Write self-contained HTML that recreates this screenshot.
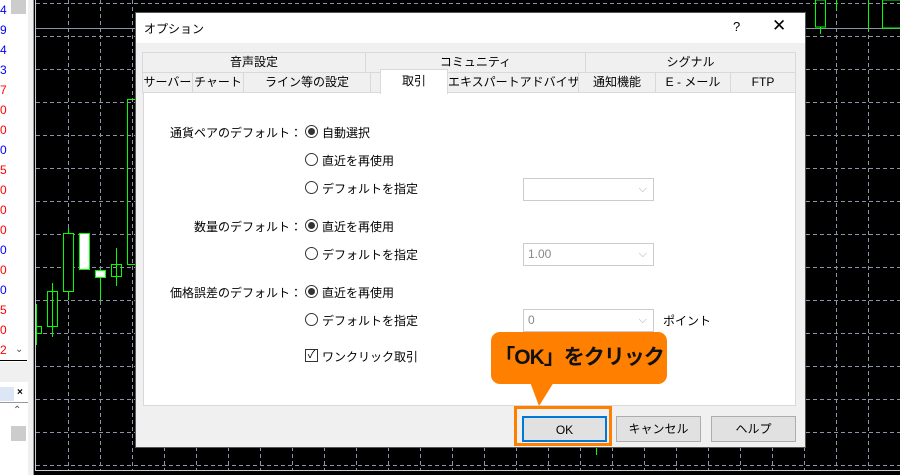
<!DOCTYPE html>
<html><head><meta charset="utf-8"><style>
*{margin:0;padding:0;box-sizing:border-box}
body{width:900px;height:475px;overflow:hidden;background:#000;position:relative;font-family:"Liberation Sans","Noto Sans CJK JP",sans-serif;font-size:12px;color:#000}
.a{position:absolute}
.lp{left:0;top:0;width:28px;height:475px;background:#fff}
.num{position:absolute;left:0;font-size:12px;line-height:12px}
.dlg{left:135px;top:12px;width:671px;height:436px;background:#f0f0f0;border:1px solid #555}
.tb{left:0;top:0;width:669px;height:30px;background:#fff}
.tab{position:absolute;height:21px;border:1px solid #d9d9d9;background:#f0f0f0;text-align:center;line-height:19px;font-size:12px;white-space:nowrap;overflow:hidden}
.panel{left:7px;top:79px;width:653px;height:314px;background:#fff;border:1px solid #d9d9d9}
.lbl{position:absolute;text-align:right;width:158px;left:0;white-space:nowrap}
.rad{position:absolute;width:13px;height:13px;border:1px solid #333;border-radius:50%;background:#fff}
.rad.on::after{content:"";position:absolute;left:2px;top:2px;width:7px;height:7px;border-radius:50%;background:#333}
.sel{position:absolute;width:131px;height:23px;border:1px solid #ccc;background:#fff;color:#888;padding-left:4px;line-height:21px}
.sel::after{content:"⌵";position:absolute;right:6px;top:0;color:#aaa;font-size:11px}
.btn{position:absolute;top:403px;height:26px;width:85px;background:#e1e1e1;border:1px solid #adadad;text-align:center;line-height:24px}
</style></head><body>
<svg class="a" style="left:0;top:0" width="900" height="475">
<g stroke="#8a93a8" stroke-dasharray="4,3" stroke-width="1">
<line x1="36" y1="3.5" x2="900" y2="3.5"/><line x1="36" y1="36.5" x2="900" y2="36.5"/><line x1="36" y1="69.5" x2="900" y2="69.5"/><line x1="36" y1="102.5" x2="900" y2="102.5"/><line x1="36" y1="135.5" x2="900" y2="135.5"/><line x1="36" y1="168.5" x2="900" y2="168.5"/><line x1="36" y1="201.5" x2="900" y2="201.5"/><line x1="36" y1="234.5" x2="900" y2="234.5"/><line x1="36" y1="267.5" x2="900" y2="267.5"/><line x1="36" y1="300.5" x2="900" y2="300.5"/><line x1="36" y1="333.5" x2="900" y2="333.5"/><line x1="36" y1="366.5" x2="900" y2="366.5"/><line x1="36" y1="399.5" x2="900" y2="399.5"/><line x1="36" y1="432.5" x2="900" y2="432.5"/><line x1="36" y1="465.5" x2="900" y2="465.5"/>
<line x1="68.5" y1="0" x2="68.5" y2="470"/><line x1="100.5" y1="0" x2="100.5" y2="470"/><line x1="132.5" y1="0" x2="132.5" y2="470"/><line x1="164.5" y1="440" x2="164.5" y2="470"/><line x1="196.5" y1="440" x2="196.5" y2="470"/><line x1="228.5" y1="440" x2="228.5" y2="470"/><line x1="260.5" y1="440" x2="260.5" y2="470"/><line x1="292.5" y1="440" x2="292.5" y2="470"/><line x1="324.5" y1="440" x2="324.5" y2="470"/><line x1="356.5" y1="440" x2="356.5" y2="470"/><line x1="388.5" y1="440" x2="388.5" y2="470"/><line x1="420.5" y1="440" x2="420.5" y2="470"/><line x1="452.5" y1="440" x2="452.5" y2="470"/><line x1="484.5" y1="440" x2="484.5" y2="470"/><line x1="516.5" y1="440" x2="516.5" y2="470"/><line x1="548.5" y1="440" x2="548.5" y2="470"/><line x1="580.5" y1="440" x2="580.5" y2="470"/><line x1="612.5" y1="440" x2="612.5" y2="470"/><line x1="644.5" y1="440" x2="644.5" y2="470"/><line x1="676.5" y1="440" x2="676.5" y2="470"/><line x1="708.5" y1="440" x2="708.5" y2="470"/><line x1="740.5" y1="440" x2="740.5" y2="470"/><line x1="772.5" y1="440" x2="772.5" y2="470"/><line x1="804.5" y1="440" x2="804.5" y2="470"/><line x1="836.5" y1="0" x2="836.5" y2="470"/><line x1="868.5" y1="0" x2="868.5" y2="470"/>
</g>
<line x1="36" y1="28.5" x2="900" y2="28.5" stroke="#8a93a8"/>
<line x1="35" y1="470.5" x2="900" y2="470.5" stroke="#ccc"/>
<line x1="35.5" y1="0" x2="35.5" y2="470" stroke="#ccc"/>
<g stroke="#00ff00" fill="none" stroke-width="1">
<line x1="36.5" y1="304" x2="36.5" y2="345"/><rect x="36.5" y="326.5" width="5" height="7"/>
<line x1="52.5" y1="283" x2="52.5" y2="337"/><rect x="47.5" y="291.5" width="10" height="35"/>
<line x1="68.5" y1="228" x2="68.5" y2="300"/><rect x="63.5" y="233.5" width="10" height="58" fill="#000"/>
<rect x="79.5" y="233.5" width="10" height="36" fill="#fff"/>
<line x1="100.5" y1="268" x2="100.5" y2="300"/><rect x="95.5" y="270.5" width="10" height="7" fill="#fff"/>
<line x1="116.5" y1="248" x2="116.5" y2="286"/><rect x="111.5" y="264.5" width="10" height="12"/>
<rect x="127.5" y="99.5" width="10" height="165"/>
<rect x="815.5" y="0" width="10" height="27"/><line x1="820.5" y1="27" x2="820.5" y2="34"/>
<line x1="836.5" y1="0" x2="836.5" y2="10"/><line x1="868.5" y1="0" x2="868.5" y2="30"/>
<rect x="882.5" y="0" width="20" height="28"/>
<line x1="596.5" y1="448" x2="596.5" y2="455"/>
</g>
</svg>
<div class="a" style="left:28px;top:0;width:6px;height:475px;background:#f0f0f0;border-right:1px solid #999"></div>
<div class="a lp"></div>
<div class="a" style="left:11px;top:0;width:15px;height:14px;background:#ccc"></div>
<div class="num" style="top:4px;color:#00f">4</div><div class="num" style="top:24px;color:#00f">9</div><div class="num" style="top:44px;color:#00f">4</div><div class="num" style="top:64px;color:#00f">3</div><div class="num" style="top:84px;color:#f00">7</div><div class="num" style="top:104px;color:#f00">0</div><div class="num" style="top:124px;color:#f00">0</div><div class="num" style="top:144px;color:#00f">0</div><div class="num" style="top:164px;color:#f00">5</div><div class="num" style="top:184px;color:#f00">0</div><div class="num" style="top:204px;color:#f00">0</div><div class="num" style="top:224px;color:#f00">0</div><div class="num" style="top:244px;color:#00f">0</div><div class="num" style="top:264px;color:#f00">0</div><div class="num" style="top:284px;color:#00f">0</div><div class="num" style="top:304px;color:#f00">5</div><div class="num" style="top:324px;color:#f00">0</div><div class="num" style="top:344px;color:#f00">2</div>
<div class="a" style="left:15px;top:344px;font-size:10px;color:#555">⌄</div>
<div class="a" style="left:0;top:360px;width:27px;height:1px;background:#000"></div>
<div class="a" style="left:0;top:362px;width:28px;height:20px;background:#f0f0f0"></div>
<div class="a" style="left:0;top:387px;width:14px;height:14px;background:#dde6f5"></div>
<div class="a" style="left:17px;top:387px;font-size:10px;font-weight:bold">×</div>
<div class="a" style="left:0;top:402px;width:28px;height:1px;background:#999"></div>
<div class="a" style="left:13px;top:405px;font-size:10px;color:#555">⌃</div>
<div class="a" style="left:11px;top:426px;width:15px;height:15px;background:#ccc"></div>

<div class="a dlg">
<div class="a tb"></div>
<div class="a" style="left:8px;top:7px;font-size:12px">オプション</div>
<div class="a" style="left:597px;top:6px;font-size:13px">?</div>
<div class="a" style="left:636px;top:3px;font-size:17px">✕</div>
<div class="tab" style="left:6px;top:39px;width:224px">音声設定</div>
<div class="tab" style="left:229px;top:39px;width:221px">コミュニティ</div>
<div class="tab" style="left:449px;top:39px;width:211px">シグナル</div>
<div class="tab" style="left:6px;top:59px;width:51px">サーバー</div>
<div class="tab" style="left:56px;top:59px;width:52px">チャート</div>
<div class="tab" style="left:107px;top:59px;width:128px">ライン等の設定</div>
<div class="tab" style="left:311px;top:59px;width:132px">エキスパートアドバイザ</div>
<div class="tab" style="left:442px;top:59px;width:78px">通知機能</div>
<div class="tab" style="left:519px;top:59px;width:76px">E - メール</div>
<div class="tab" style="left:594px;top:59px;width:66px">FTP</div>
<div class="a panel">
<div class="lbl" style="top:31px">通貨ペアのデフォルト：</div>
<div class="rad on" style="left:161px;top:32px"></div><div class="a" style="left:178px;top:31px">自動選択</div>
<div class="rad" style="left:161px;top:60px"></div><div class="a" style="left:178px;top:59px">直近を再使用</div>
<div class="rad" style="left:161px;top:88px"></div><div class="a" style="left:178px;top:87px">デフォルトを指定</div>
<div class="sel" style="left:379px;top:85px"></div>
<div class="lbl" style="top:125px">数量のデフォルト：</div>
<div class="rad on" style="left:161px;top:126px"></div><div class="a" style="left:178px;top:125px">直近を再使用</div>
<div class="rad" style="left:161px;top:154px"></div><div class="a" style="left:178px;top:153px">デフォルトを指定</div>
<div class="sel" style="left:379px;top:150px">1.00</div>
<div class="lbl" style="top:191px">価格誤差のデフォルト：</div>
<div class="rad on" style="left:161px;top:192px"></div><div class="a" style="left:178px;top:191px">直近を再使用</div>
<div class="rad" style="left:161px;top:220px"></div><div class="a" style="left:178px;top:219px">デフォルトを指定</div>
<div class="sel" style="left:379px;top:216px">0</div>
<div class="a" style="left:519px;top:219px">ポイント</div>
<div class="a" style="left:161px;top:256px;width:13px;height:13px;border:1px solid #333;background:#fff;font-size:11px;line-height:11px;text-align:center">✓</div>
<div class="a" style="left:178px;top:255px">ワンクリック取引</div>
</div>
<div class="tab" style="left:244px;top:56px;width:68px;height:25px;background:#fff;border-bottom:none;line-height:22px">取引</div>
<div class="btn" style="left:386px;border:2px solid #0078d7">OK</div>
<div class="btn" style="left:480px">キャンセル</div>
<div class="btn" style="left:575px">ヘルプ</div>
</div>
<div class="a" style="left:514px;top:406px;width:98px;height:40px;border:3px solid #ff8000"></div>
<div class="a" style="left:491px;top:332px;width:176px;height:52px;background:#ff8000;border-radius:9px;color:#111;font-weight:bold;font-size:21px;line-height:52px;text-align:center;white-space:nowrap;letter-spacing:-1px">「OK」をクリック</div>
<svg class="a" style="left:528px;top:382px" width="30" height="25"><polygon points="2,0 26,0 11,24" fill="#ff8000"/></svg>
</body></html>
